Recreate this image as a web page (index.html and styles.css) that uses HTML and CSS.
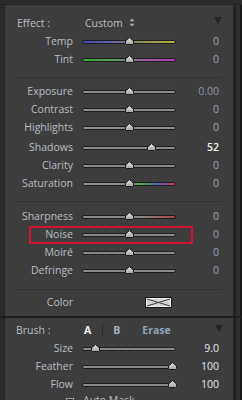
FILE: index.html
```html
<!DOCTYPE html>
<html>
<head>
<meta charset="utf-8">
<link rel="stylesheet" href="styles.css">
</head>
<body>
<svg class="defs" width="0" height="0" aria-hidden="true">
  <defs>
    <linearGradient id="tg" x1="0" y1="0" x2="0" y2="1">
      <stop offset="0" stop-color="#e6e6e6"/>
      <stop offset="1" stop-color="#a2a2a2"/>
    </linearGradient>
    <symbol id="thumb" viewBox="0 0 9 8">
      <path d="M4.5 0.6 L8.5 4 L8.5 6.6 Q8.5 7.5 7.6 7.5 L1.4 7.5 Q0.5 7.5 0.5 6.6 L0.5 4 Z" fill="url(#tg)" stroke="#1c1c1c" stroke-width="1"/>
    </symbol>
  </defs>
</svg>
<div class="frame">
  <div class="topline"></div>
  <div class="band band1">
    <div class="gl"></div>
    <div class="panel p1">
      <div class="hdr">
        <span class="hl">Effect :</span>
        <span class="custom">Custom</span>
        <svg class="updown" width="6" height="9" viewBox="0 0 6 9"><path d="M3 0.5 L5.5 3.2 L0.5 3.2 Z M0.5 5.8 L5.5 5.8 L3 8.5 Z" fill="#a9adb2"/></svg>
        <span class="tri"></span>
      </div>
      <div class="row"><span class="lbl">Temp</span><div class="slider temp" style="--p:.5"><span class="track"></span><svg class="thumb"><use href="#thumb"/></svg></div><span class="val">0</span></div>
      <div class="row"><span class="lbl">Tint</span><div class="slider tint" style="--p:.5"><span class="track"></span><svg class="thumb"><use href="#thumb"/></svg></div><span class="val">0</span></div>
      <div class="sep sep1"></div>
      <div class="row"><span class="lbl">Exposure</span><div class="slider" style="--p:.5"><span class="track"></span><svg class="thumb"><use href="#thumb"/></svg></div><span class="val dim">0.00</span></div>
      <div class="row"><span class="lbl">Contrast</span><div class="slider" style="--p:.5"><span class="track"></span><svg class="thumb"><use href="#thumb"/></svg></div><span class="val">0</span></div>
      <div class="row"><span class="lbl">Highlights</span><div class="slider" style="--p:.5"><span class="track"></span><svg class="thumb"><use href="#thumb"/></svg></div><span class="val">0</span></div>
      <div class="row gap2"><span class="lbl">Shadows</span><div class="slider" style="--p:.76"><span class="track"></span><svg class="thumb"><use href="#thumb"/></svg></div><span class="val hot">52</span></div>
      <div class="row"><span class="lbl">Clarity</span><div class="slider" style="--p:.5"><span class="track"></span><svg class="thumb"><use href="#thumb"/></svg></div><span class="val">0</span></div>
      <div class="row"><span class="lbl">Saturation</span><div class="slider sat" style="--p:.5"><span class="track"></span><svg class="thumb"><use href="#thumb"/></svg></div><span class="val">0</span></div>
      <div class="sep sep2"></div>
      <div class="row"><span class="lbl">Sharpness</span><div class="slider sharp" style="--p:.5"><span class="track"></span><svg class="thumb"><use href="#thumb"/></svg></div><span class="val">0</span></div>
      <div class="row"><span class="lbl">Noise</span><div class="slider" style="--p:.5"><span class="track"></span><svg class="thumb"><use href="#thumb"/></svg></div><span class="val">0</span><span class="mark"></span></div>
      <div class="row"><span class="lbl">Moiré</span><div class="slider" style="--p:.5"><span class="track"></span><svg class="thumb"><use href="#thumb"/></svg></div><span class="val">0</span></div>
      <div class="row"><span class="lbl">Defringe</span><div class="slider" style="--p:.5"><span class="track"></span><svg class="thumb"><use href="#thumb"/></svg></div><span class="val">0</span></div>
      <div class="sep sep3"></div>
      <div class="row"><span class="lbl">Color</span><div class="swatchcell"><svg class="swatch" width="27" height="11" viewBox="0 0 27 11"><rect x="0.5" y="0.5" width="26" height="10" fill="#d4d4d4" stroke="#151515"/><rect x="1.5" y="1.5" width="24" height="8" fill="none" stroke="#f0f0f0"/><path d="M2 2 L25 9 M2 9 L25 2" stroke="#3a3a3a" stroke-width="1"/></svg></div><span></span></div>
    </div>
    <div class="gr"></div>
  </div>
  <div class="divider"></div>
  <div class="band band2">
    <div class="gl"></div>
    <div class="panel p2">
      <div class="brush">
        <span class="bl">Brush :</span>
        <span class="ta">A</span>
        <span class="vsep"></span>
        <span class="tb">B</span>
        <span class="te">Erase</span>
        <span class="tri"></span>
      </div>
      <div class="row"><span class="lbl">Size</span><div class="slider" style="--p:.105"><span class="track"></span><svg class="thumb"><use href="#thumb"/></svg></div><span class="val hi">9.0</span></div>
      <div class="row"><span class="lbl">Feather</span><div class="slider" style="--p:1"><span class="track"></span><svg class="thumb"><use href="#thumb"/></svg></div><span class="val hi">100</span></div>
      <div class="row"><span class="lbl">Flow</span><div class="slider" style="--p:1"><span class="track"></span><svg class="thumb"><use href="#thumb"/></svg></div><span class="val hi">100</span></div>
      <div class="row auto"><span class="chk"></span><span class="autotxt">Auto Mask</span><span></span></div>
    </div>
    <div class="gr"></div>
  </div>
</div>
</body>
</html>
```
FILE: styles.css
```css
* { box-sizing: border-box; margin: 0; padding: 0; }

html, body {
  width: 242px;
  height: 400px;
  overflow: hidden;
}

body {
  background: #2c2c2c;
  font-family: "Open Sans", "Noto Sans", sans-serif;
  font-size: 10.5px;
  color: #b9bec4;
}

.defs { position: absolute; width: 0; height: 0; overflow: hidden; }

.frame {
  height: 400px;
  padding-top: 4px;
  display: flex;
  flex-direction: column;
}

.topline { height: 1px; background: #232323; }

.band { display: flex; }
.band1 { height: 311px; }
.band2 { flex: 1; overflow: hidden; }

.divider { height: 2px; background: #1f1f1f; }

.gl {
  width: 5px;
  background: #2c2c2c;
  border-right: 1px solid #232323;
}

.panel {
  width: 228px;
  background: #3d3d3d;
}

.gr {
  width: 9px;
  background: #303030;
  border-left: 3px solid #222222;
  border-right: 2px solid #181818;
}

.p1 { padding-top: 8px; }
.p2 { padding-top: 3px; }

/* header rows */
.hdr {
  display: flex;
  align-items: center;
  height: 19px;
  padding-left: 12px;
}
.hl { width: 68px; white-space: nowrap; }
.custom { white-space: nowrap; }
.updown { margin-left: 6px; display: block; }

.tri {
  margin-left: auto;
  margin-right: 11px;
  width: 0;
  height: 0;
  border-left: 4px solid transparent;
  border-right: 4px solid transparent;
  border-top: 7px solid #262626;
  margin-top: -4px;
}

.brush {
  display: flex;
  align-items: center;
  height: 18px;
  padding-left: 11px;
}
.bl { width: 68px; white-space: nowrap; }
.ta { font-weight: 700; color: #f4f4f4; }
.vsep { width: 1px; height: 12px; background: #2a2a2a; margin-left: 11px; }
.tb { font-weight: 700; color: #a3b1c0; margin-left: 10px; }
.te { font-weight: 700; color: #8fa4bc; margin-left: 22px; }
.brush .tri { margin-right: 10px; margin-top: -3px; }

/* slider rows */
.row {
  display: grid;
  grid-template-columns: 68px 94px 34px;
  column-gap: 9px;
  height: 18px;
  align-items: center;
  position: relative;
}
.gap2 { margin-top: 2px; }

.lbl {
  text-align: right;
  line-height: 18px;
  white-space: nowrap;
}

.val {
  text-align: right;
  line-height: 18px;
  color: #98a7b8;
}
.val.dim { color: #8d98a6; }
.val.hot { color: #f2f2f2; font-weight: 600; }
.val.hi { color: #e6e8ec; }

.slider {
  position: relative;
  height: 18px;
  display: flex;
  align-items: center;
}
.slider::before {
  content: "";
  position: absolute;
  left: 4px;
  right: 4px;
  top: 5px;
  height: 2px;
  background: repeating-linear-gradient(90deg, #4b4b4b 0 1px, transparent 1px 8.5px);
}

.track {
  display: block;
  width: 100%;
  height: 4px;
  margin-top: 1px;
  border-radius: 2px;
  border: 1px solid #1d1d1d;
  background: #8a8a8a;
}
.temp .track { background: linear-gradient(90deg, #4646b8, #6a6aa0 40%, #8e8e60 60%, #b2b23c); }
.tint .track { background: linear-gradient(90deg, #38a838, #6a946a 40%, #946a94 60%, #b438b4); }
.sat .track { background: linear-gradient(90deg, #8a8a8a 0%, #8a8a8a 52%, #4aa04a 66%, #5a5ac8 82%, #c83c3c 100%); }
.sharp .track { background: linear-gradient(90deg, #8a8a8a 0%, #8a8a8a 62%, #a24646 100%); }

.thumb {
  position: absolute;
  top: 5px;
  left: calc(4px + (100% - 8px) * var(--p) - 4.5px);
  width: 9px;
  height: 8px;
}

.sep {
  height: 1px;
  width: 207px;
  background: #333333;
  margin-left: 11px;
}
.sep1 { margin-top: 9px; margin-bottom: 4px; }
.sep2 { margin-top: 9px; margin-bottom: 5px; }
.sep3 { margin-top: 10px; margin-bottom: 3px; }

.swatchcell { height: 18px; display: flex; align-items: center; }
.swatch { display: block; margin-left: 63px; margin-top: 1px; }

.mark {
  position: absolute;
  left: 24px;
  top: 1px;
  width: 164px;
  height: 18px;
  border: 2px solid #d4112e;
}

.auto { margin-top: -2px; }
.chk {
  justify-self: end;
  width: 8px;
  height: 8px;
  margin-right: -1px;
  margin-top: 4px;
  border: 1px solid #9a9a9a;
  background: #2e2e2e;
}
.autotxt { line-height: 18px; white-space: nowrap; margin-left: 1px; }
```
